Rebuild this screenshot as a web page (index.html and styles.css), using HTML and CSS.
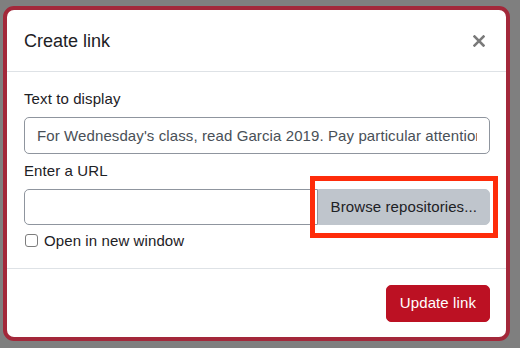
FILE: index.html
```html
<!DOCTYPE html>
<html>
<head>
<meta charset="utf-8">
<link rel="stylesheet" href="styles.css">
</head>
<body>
<div class="backdrop">
  <div class="modal">
    <div class="modal-content">
      <div class="modal-header">
        <h5 class="modal-title">Create link</h5>
        <button class="close" aria-label="Close">
          <svg width="12" height="12" viewBox="0 0 12 12"><path d="M1.5 1.5 L10.5 10.5 M10.5 1.5 L1.5 10.5" stroke="#7a7a7a" stroke-width="2.5" stroke-linecap="square"/></svg>
        </button>
      </div>
      <div class="modal-body">
        <label class="field-label">Text to display</label>
        <input class="form-control" type="text" value="For Wednesday's class, read Garcia 2019. Pay particular attention to the methods section.">
        <label class="field-label url-label">Enter a URL</label>
        <div class="input-group">
          <input class="form-control grow" type="text" value="">
          <button class="btn btn-secondary">Browse repositories...</button>
          <span class="annotation"></span>
        </div>
        <label class="check">
          <input class="checkbox" type="checkbox">
          <span>Open in new window</span>
        </label>
      </div>
      <div class="modal-footer">
        <button class="btn btn-primary">Update link</button>
      </div>
    </div>
  </div>
</div>
</body>
</html>
```
FILE: styles.css
```css
html, body {
  margin: 0;
  padding: 0;
}
body {
  background: #7f7f7f;
  font-family: "Liberation Sans", Arial, sans-serif;
  color: #1d2125;
  width: 520px;
  height: 348px;
  overflow: hidden;
}
.backdrop {
  padding: 6px 0 0 3px;
}
.modal {
  box-sizing: border-box;
  width: 507px;
  height: 335px;
  border: 4px solid #a3283a;
  border-radius: 11px;
  background: #a3283a;
}
.modal-content {
  background: #fff;
  border-radius: 7px;
  height: 100%;
  display: flex;
  flex-direction: column;
}
.modal-header {
  display: flex;
  align-items: center;
  justify-content: space-between;
  padding: 17px 16px 16px 17px;
  border-bottom: 1px solid #dee2e6;
}
.modal-title {
  margin: 0;
  font-size: 18px;
  line-height: 28px;
  font-weight: 400;
  color: #1d2125;
}
.close {
  border: 0;
  background: none;
  padding: 0;
  margin: 0 5px 0 0;
  width: 12px;
  height: 12px;
  display: flex;
}
.modal-body {
  padding: 16px 16px 16px 17px;
  display: flex;
  flex-direction: column;
  letter-spacing: 0.1px;
}
.field-label {
  font-size: 15px;
  line-height: 22.5px;
  margin-bottom: 6.5px;
}
.url-label {
  margin-top: 6px;
}
.form-control {
  box-sizing: border-box;
  width: 100%;
  height: 36.5px;
  padding: 6px 12px;
  font-family: inherit;
  font-size: 15px;
  line-height: 22.5px;
  letter-spacing: 0.1px;
  color: #495057;
  border: 1px solid #8f959e;
  border-radius: 5px;
  background: #fff;
  margin: 0;
  outline: none;
}
.input-group {
  position: relative;
  display: flex;
}
.input-group .grow {
  flex: 1;
  min-width: 0;
  border-top-right-radius: 0;
  border-bottom-right-radius: 0;
}
.btn {
  font-family: inherit;
  font-size: 15px;
  line-height: 22.5px;
  padding: 6px 12px;
  border: 1px solid transparent;
  border-radius: 5px;
  margin: 0;
  height: 36.5px;
  box-sizing: border-box;
  white-space: nowrap;
  letter-spacing: 0.1px;
}
.btn-secondary {
  background: #bfc5cc;
  border-color: #bfc5cc;
  color: #1d2125;
  border-top-left-radius: 0;
  border-bottom-left-radius: 0;
}
.btn-primary {
  background: #bc1123;
  border-color: #bc1123;
  color: #fff;
  padding: 6px 13px;
  height: 37px;
}
.annotation {
  position: absolute;
  left: 286px;
  top: -13px;
  width: 188px;
  height: 62px;
  box-sizing: border-box;
  border: 5px solid #fe2c0a;
  pointer-events: none;
}
.check {
  display: flex;
  align-items: center;
  margin-top: 4.5px;
  font-size: 15px;
  line-height: 22.5px;
}
.checkbox {
  appearance: none;
  -webkit-appearance: none;
  box-sizing: border-box;
  width: 13px;
  height: 13px;
  margin: 0 6.5px 0 0.5px;
  border: 1px solid #7d7d7d;
  border-radius: 3px;
  background: #fff;
}
.modal-footer {
  margin-top: auto;
  display: flex;
  justify-content: flex-end;
  padding: 16px 16px 15px 17px;
  border-top: 1px solid #dee2e6;
}
```
